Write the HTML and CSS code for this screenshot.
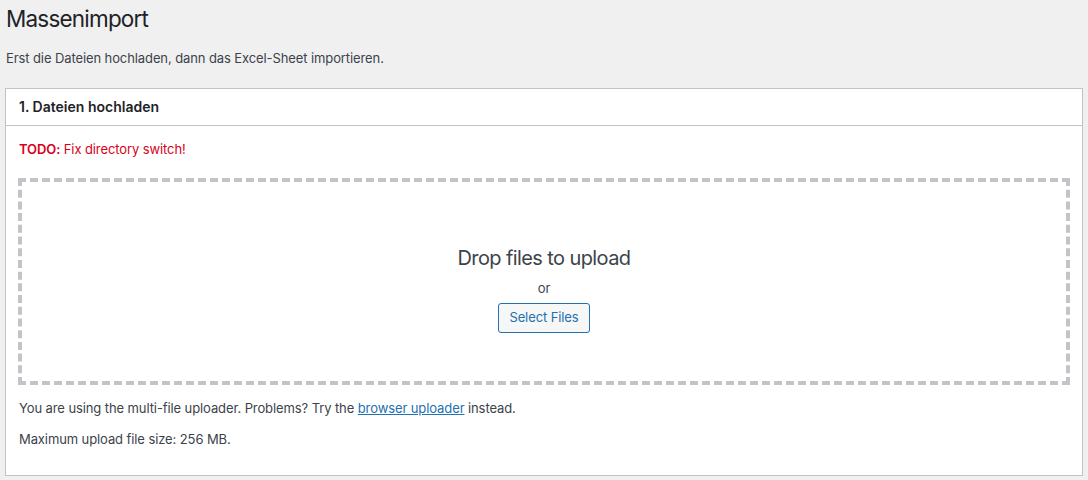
FILE: index.html
```html
<!DOCTYPE html>
<html lang="de">
<head>
    <meta charset="UTF-8">
    <title>Massenimport</title>
    <link rel="stylesheet" href="styles.css">
</head>
<body>
    <div class="wrap">
        <h1>Massenimport</h1>
        <p class="intro">Erst die Dateien hochladen, dann das Excel-Sheet importieren.</p>

        <div class="postbox">
            <h2 class="postbox-title">1. Dateien hochladen</h2>
            <div class="inside">
                <p class="todo"><strong>TODO:</strong> Fix directory switch!</p>

                <div class="drag-drop-area">
                    <p class="drop-info">Drop files to upload</p>
                    <p class="drop-or">or</p>
                    <button type="button" class="button">Select Files</button>
                </div>

                <p class="upload-flash">You are using the multi-file uploader. Problems? Try the <a href="#">browser uploader</a> instead.</p>
                <p class="max-size">Maximum upload file size: 256 MB.</p>
            </div>
        </div>
    </div>
</body>
</html>
```

FILE: styles.css
```css
html, body {
    margin: 0;
    padding: 0;
}
body {
    background-color: #f0f0f1;
    color: #3c434a;
    font-family: Inter, Roboto, "Liberation Sans", sans-serif;
    font-size: 13px;
    line-height: 1.4em;
    letter-spacing: -0.1px;
}
.wrap {
    margin: 0 5px;
}
.wrap h1 {
    font-size: 22.5px;
    font-weight: 400;
    letter-spacing: -0.8px;
    color: #1d2327;
    margin: 0;
    padding: 4px 0 4px 1px;
    line-height: 1.33;
}
.intro {
    margin: 11px 0 21px 1px;
    color: #3c434a;
}
.postbox {
    background: #fff;
    border: 1px solid #c3c4c7;
    box-shadow: 0 1px 1px rgba(0, 0, 0, 0.04);
}
.postbox-title {
    font-size: 14px;
    font-weight: 600;
    letter-spacing: 0;
    color: #1d2327;
    margin: 0;
    padding: 8px 13px;
    line-height: 1.4;
    border-bottom: 1px solid #c3c4c7;
}
.inside {
    padding: 0 12px 12px;
}
.todo {
    color: #d9001b;
    margin: 14px 0 20px 1px;
}
.todo strong {
    font-weight: 600;
}
.drag-drop-area {
    border: 4px dashed #c3c4c7;
    height: 199px;
    box-sizing: content-box;
    display: flex;
    flex-direction: column;
    align-items: center;
}
.drop-info {
    font-size: 20px;
    letter-spacing: -0.6px;
    margin: 62px 0 0;
    line-height: 1.4;
}
.drop-or {
    margin: 7px 0 6px;
}
.button {
    font-family: inherit;
    font-size: 13px;
    letter-spacing: -0.1px;
    line-height: 2.15;
    min-height: 30px;
    padding: 0 10px;
    color: #2271b1;
    border: 1px solid #2271b1;
    border-radius: 3px;
    background: #f6f7f7;
    cursor: pointer;
}
.upload-flash {
    margin: 14px 0 0 1px;
}
.max-size {
    margin: 13px 0 15px 1px;
}
a {
    color: #2271b1;
}
```
